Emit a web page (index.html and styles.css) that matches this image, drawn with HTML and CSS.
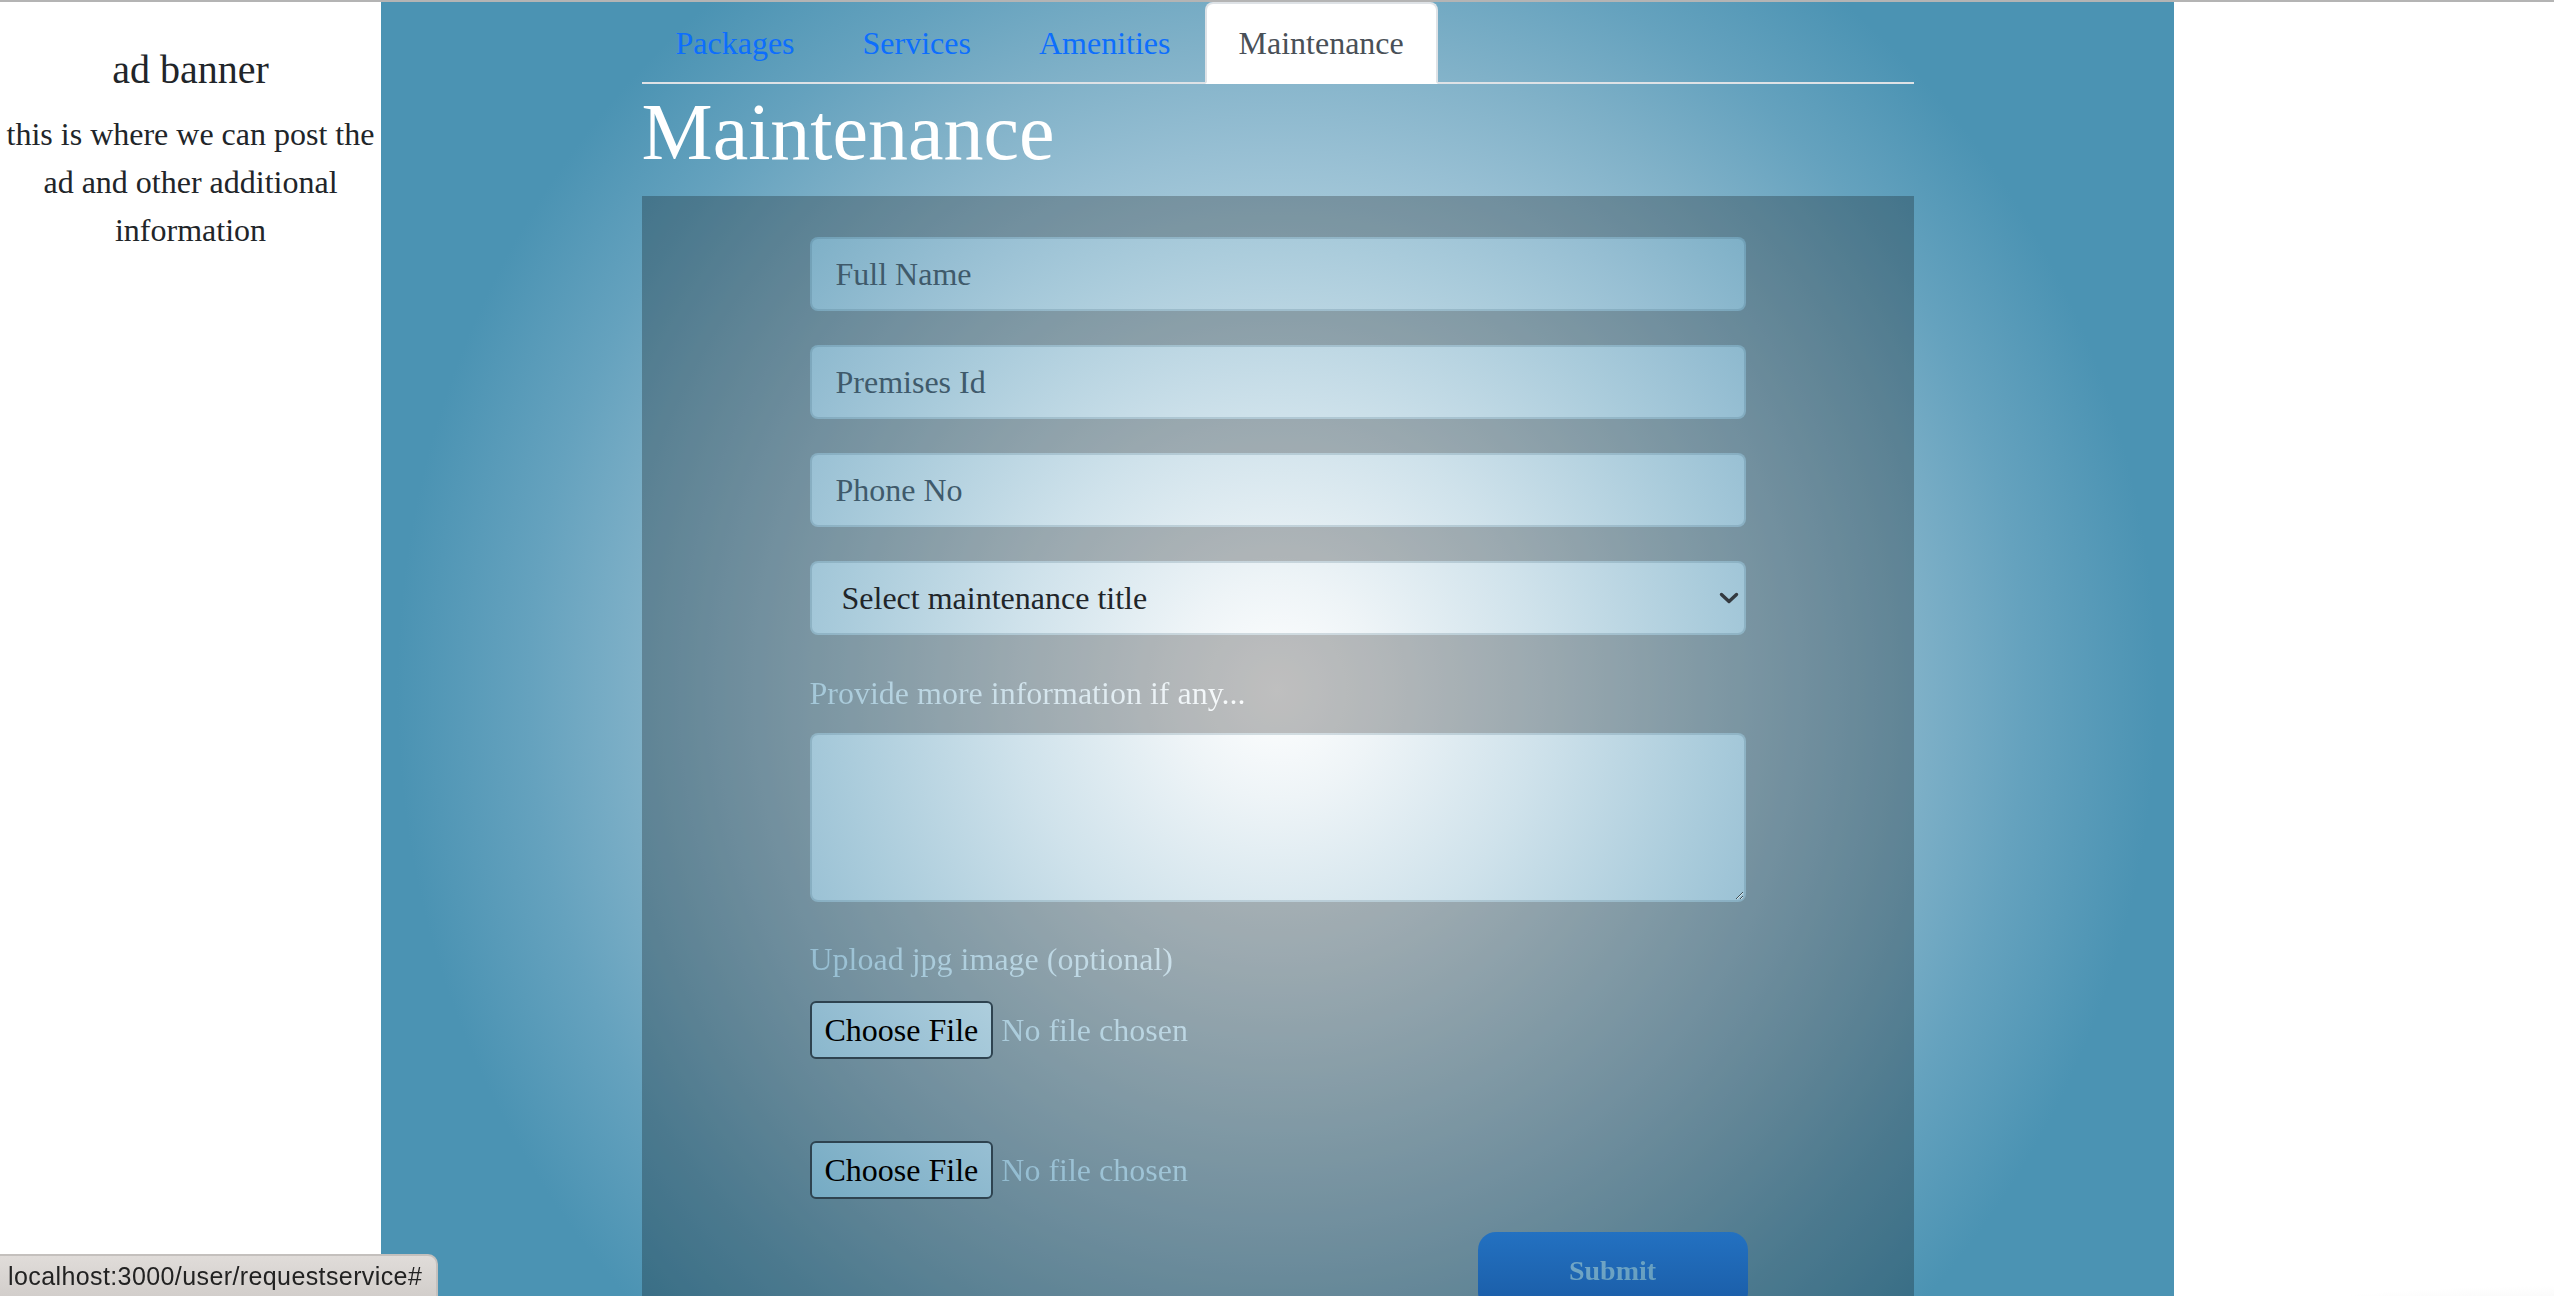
FILE: index.html
```html
<!DOCTYPE html>
<html lang="en">
<head>
<meta charset="utf-8">
<title>Maintenance</title>
<link rel="stylesheet" href="styles.css">
</head>
<body>
<div class="layout">
  <aside class="ad">
    <h5 class="ad-title">ad banner</h5>
    <p class="ad-text">this is where we can post the ad and other additional information</p>
  </aside>
  <main class="main">
    <div class="container">
      <ul class="tabs">
        <li><a class="tab" href="#">Packages</a></li>
        <li><a class="tab" href="#">Services</a></li>
        <li><a class="tab" href="#">Amenities</a></li>
        <li><a class="tab active" href="#">Maintenance</a></li>
      </ul>
      <h1 class="title">Maintenance</h1>
      <section class="panel">
        <form class="form">
          <input class="field" type="text" placeholder="Full Name">
          <input class="field" type="text" placeholder="Premises Id">
          <input class="field" type="text" placeholder="Phone No">
          <div class="select-wrap">
            <select class="field select">
              <option>Select maintenance title</option>
            </select>
            <svg class="chevron" width="20" height="12" viewBox="0 0 20 12"><polyline points="2.5,2.5 10,9.5 17.5,2.5" fill="none" stroke="#343a40" stroke-width="3.4" stroke-linecap="round" stroke-linejoin="round"/></svg>
          </div>
          <label class="label glow-text">Provide more information if any...</label>
          <textarea class="field area"></textarea>
          <label class="label upload glow-text">Upload jpg image (optional)</label>
          <div class="file-row first">
            <button type="button" class="file-btn">Choose File</button>
            <span class="file-name glow-text">No file chosen</span>
          </div>
          <div class="file-row">
            <button type="button" class="file-btn">Choose File</button>
            <span class="file-name glow-text">No file chosen</span>
          </div>
          <div class="actions">
            <button type="button" class="submit"><span class="submit-text glow-text">Submit</span></button>
          </div>
        </form>
      </section>
    </div>
  </main>
  <aside class="right"></aside>
</div>
<div class="status">localhost:3000/user/requestservice#</div>
</body>
</html>
```
FILE: styles.css
```css
:root {
  --glow: radial-gradient(ellipse 880px 900px at 1277px 690px,
    #ffffff 0%, #eef4f7 12%, #cfe2eb 30%, #a9cbdb 50%, #97bfd3 60%,
    #80b1c8 72%, #65a2be 85%, #4b93b3 100%);
}

* { box-sizing: border-box; }

html, body {
  margin: 0;
  height: 100%;
  overflow: hidden;
}

body {
  font-family: "Liberation Serif", "Times New Roman", serif;
  font-size: 32px;
  line-height: 1.5;
  color: #212529;
  background: #fff;
  border-top: 2px solid #b4b4b4;
}

.layout {
  display: grid;
  grid-template-columns: 381px 1793px 1fr;
  height: 100%;
}

.ad {
  padding-top: 44px;
  text-align: center;
  background: linear-gradient(to bottom, #ffffff calc(100% - 80px), #ebebeb 100%);
}

.ad-title {
  margin: 0 0 16px;
  font-size: 40px;
  font-weight: 400;
  line-height: 1.2;
}

.ad-text { margin: 0; }

.right {
  background:
    radial-gradient(ellipse 520px 110px at 100% 100%, rgba(200,200,200,0.9), rgba(255,255,255,0) 100%),
    linear-gradient(to bottom, #ffffff calc(100% - 70px), #f0f0f0 100%);
}

.main {
  background: var(--glow);
  background-attachment: fixed;
}

.container {
  width: 1272px;
  margin: 0 auto;
}

.tabs {
  display: flex;
  list-style: none;
  margin: 0;
  padding: 0;
  border-bottom: 2px solid #dee2e6;
}

.tabs li { display: block; }

.tab {
  display: block;
  padding: 15px 32px;
  border: 2px solid transparent;
  border-radius: 8px 8px 0 0;
  margin-bottom: -2px;
  color: #0d6efd;
  text-decoration: none;
}

.tab.active {
  background: #fff;
  color: #495057;
  border-color: #dee2e6 #dee2e6 #fff;
}

.title {
  margin: 0 0 16px;
  font-size: 80px;
  font-weight: 400;
  line-height: 1.2;
  color: #fff;
}

.panel {
  background: rgba(0, 0, 0, 0.25);
  padding: 41px 0 60px;
  min-height: 1200px;
}

.form {
  width: 936px;
  margin: 0 auto;
  display: flex;
  flex-direction: column;
}

.field {
  display: block;
  width: 100%;
  margin: 0 0 34px;
  padding: 11px 24px;
  font-family: inherit;
  font-size: 32px;
  line-height: 48px;
  color: #212529;
  border: 2px solid rgba(60, 100, 120, 0.2);
  border-radius: 8px;
  background: var(--glow);
  background-attachment: fixed;
  outline: none;
}

.field::placeholder {
  color: #3f5a6b;
  opacity: 1;
}

.select-wrap {
  position: relative;
  margin-bottom: 34px;
}

.select {
  margin: 0;
  height: 74px;
  padding: 0 50px 0 30px;
  -webkit-appearance: none;
  appearance: none;
}

.chevron {
  position: absolute;
  right: 7px;
  top: 50%;
  transform: translateY(-50%);
}

.area {
  height: 169px;
  margin-bottom: 33px;
  resize: vertical;
}

.glow-text {
  background: var(--glow);
  background-attachment: fixed;
  -webkit-background-clip: text;
  background-clip: text;
  color: transparent;
}

.label {
  display: block;
  margin-bottom: 16px;
  line-height: 48px;
}

.label.upload { margin-bottom: 18px; }

.file-row {
  display: flex;
  align-items: center;
  gap: 8px;
}

.file-row.first { margin-bottom: 82px; }

.file-btn {
  font-family: inherit;
  font-size: 32px;
  line-height: 36px;
  padding: 9px 13px;
  color: #000;
  border: 2px solid #2e4350;
  border-radius: 6px;
  background: var(--glow);
  background-attachment: fixed;
}

.file-name { line-height: 48px; }

.actions {
  display: flex;
  justify-content: flex-end;
  margin-top: 33px;
  margin-right: -2px;
}

.submit {
  width: 270px;
  padding: 22px 0;
  border: 0;
  border-radius: 18px;
  background: linear-gradient(180deg, #2371c1 0%, #1a5ca6 100%);
  font-family: inherit;
  font-size: 28px;
  font-weight: 700;
  line-height: 34px;
}

.submit-text { opacity: 0.85; }

.status {
  position: fixed;
  left: 0;
  bottom: 0;
  height: 42px;
  padding: 0 14px 0 8px;
  font-family: "Liberation Sans", Arial, sans-serif;
  font-size: 25px;
  letter-spacing: 0.4px;
  line-height: 40px;
  color: #222;
  background: linear-gradient(180deg, #e0dcd9, #d2cecb);
  border-top: 2px solid #c4c0bd;
  border-right: 2px solid #c4c0bd;
  border-top-right-radius: 10px;
}
```
